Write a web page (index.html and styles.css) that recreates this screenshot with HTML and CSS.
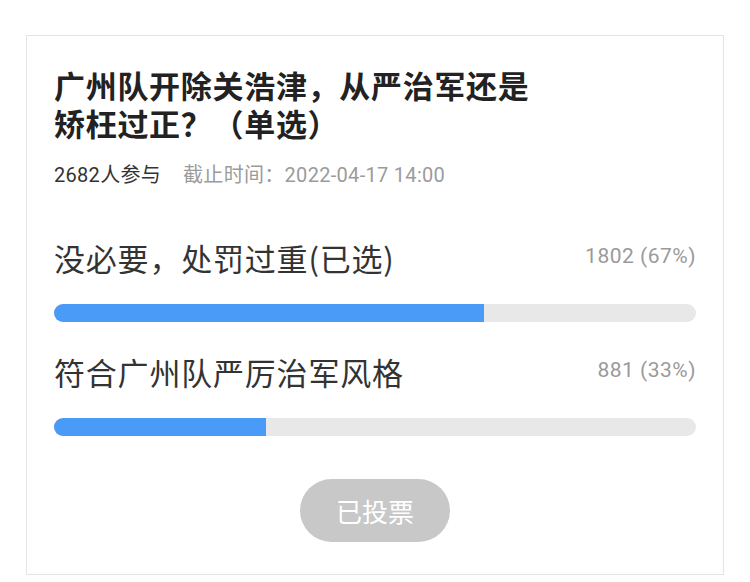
FILE: index.html
```html
<!DOCTYPE html>
<html lang="zh-CN">
<head>
<meta charset="utf-8">
<title>投票</title>
<link rel="stylesheet" href="styles.css">
</head>
<body>
<div class="card">
  <h1 class="title">广州队开除关浩津，从严治军还是矫枉过正？（单选）</h1>
  <div class="meta"><span class="count">2682人参与</span><span class="deadline">截止时间：2022-04-17 14:00</span></div>
  <div class="options">
    <div class="option">
      <div class="option-head"><span class="label">没必要，处罚过重(已选)</span><span class="votes">1802 (67%)</span></div>
      <div class="track"><div class="fill" style="width:67%"></div></div>
    </div>
    <div class="option">
      <div class="option-head"><span class="label">符合广州队严厉治军风格</span><span class="votes">881 (33%)</span></div>
      <div class="track"><div class="fill" style="width:33%"></div></div>
    </div>
  </div>
  <div class="actions"><button class="voted" type="button">已投票</button></div>
</div>
</body>
</html>
```
FILE: styles.css
```css
html, body {
  margin: 0;
  padding: 0;
  background: #ffffff;
}
body {
  font-family: Roboto, "Noto Sans CJK SC", "Noto Sans", sans-serif;
  padding: 35px 26px 0 26px;
}
.card {
  box-sizing: border-box;
  width: 698px;
  height: 540px;
  border: 1px solid #e4e4e4;
  padding: 30px 27px 0 27px;
  display: flex;
  flex-direction: column;
}
.title {
  margin: 0;
  max-width: 500px;
  font-family: "Noto Sans CJK SC", sans-serif;
  font-size: 31px;
  line-height: 38px;
  font-weight: 700;
  letter-spacing: 0.7px;
  color: #222222;
}
.meta {
  margin-top: 20px;
  font-size: 20px;
  line-height: 26px;
  letter-spacing: 0.3px;
  display: flex;
  gap: 22px;
}
.count { color: #333333; }
.deadline { color: #9b9b9b; }
.options {
  margin-top: 50px;
  display: flex;
  flex-direction: column;
  gap: 30px;
}
.option {
  display: flex;
  flex-direction: column;
  gap: 26px;
}
.option-head {
  display: flex;
  justify-content: space-between;
  align-items: center;
  height: 40px;
}
.label {
  font-family: "Noto Sans CJK SC", sans-serif;
  font-size: 31px;
  line-height: 40px;
  letter-spacing: 0.8px;
  color: #333333;
}
.votes {
  font-size: 21px;
  letter-spacing: 0.5px;
  color: #9a9a9a;
  margin-top: -4px;
}
.track {
  height: 18px;
  border-radius: 9px;
  background: #e8e8e8;
  overflow: hidden;
}
.fill {
  height: 100%;
  background: #4a9af7;
}
.actions {
  margin-top: 43px;
  display: flex;
  justify-content: center;
}
.voted {
  width: 150px;
  height: 63px;
  border: none;
  border-radius: 32px;
  background: #c8c8c8;
  color: #ffffff;
  font-family: "Noto Sans CJK SC", sans-serif;
  font-size: 26px;
  padding: 0;
}
```
